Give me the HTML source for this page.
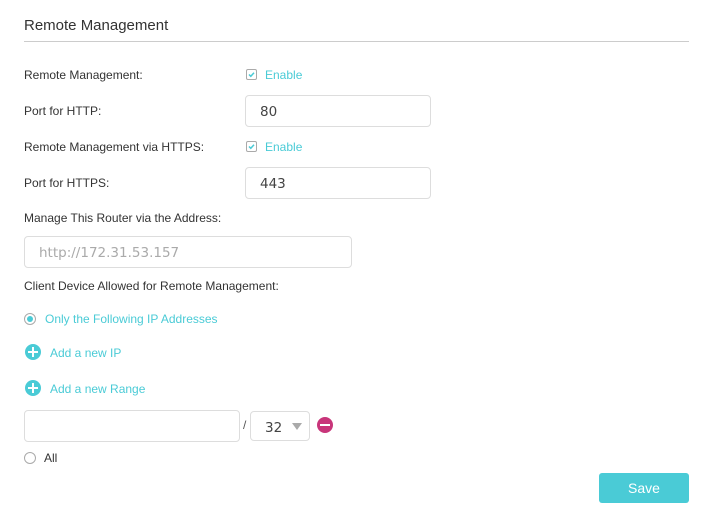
<!DOCTYPE html>
<html><head><style>
body{margin:0;width:708px;height:517px;background:#fff;font-family:"Liberation Sans",sans-serif;font-size:12px;color:#333;position:relative;overflow:hidden}
.a{position:absolute;white-space:nowrap}
.in{position:absolute;border:1px solid #ddd;border-radius:4px;box-sizing:border-box;font-family:"DejaVu Sans",sans-serif;font-size:13.5px;color:#444;padding-left:14px}
.t{color:#4acbd6}
</style></head><body>
<div class="a" style="left:24px;top:17px;font-size:15px;color:#333">Remote Management</div>
<div class="a" style="left:24px;top:41px;width:665px;height:1px;background:#ccc"></div>

<div class="a" style="left:24px;top:68px">Remote Management:</div>
<svg class="a" style="left:246px;top:69px" width="12" height="12"><rect x="0.5" y="0.5" width="10" height="10" rx="1.5" fill="#fff" stroke="#aaa"/><path d="M3 5.5L4.8 7.3L8 3.8" stroke="#4acbd6" stroke-width="1.5" fill="none"/></svg>
<div class="a t" style="left:265px;top:68px">Enable</div>

<div class="a" style="left:24px;top:104px">Port for HTTP:</div>
<div class="in" style="left:245px;top:95px;width:186px;height:32px;line-height:33px">80</div>

<div class="a" style="left:24px;top:140px">Remote Management via HTTPS:</div>
<svg class="a" style="left:246px;top:141px" width="12" height="12"><rect x="0.5" y="0.5" width="10" height="10" rx="1.5" fill="#fff" stroke="#aaa"/><path d="M3 5.5L4.8 7.3L8 3.8" stroke="#4acbd6" stroke-width="1.5" fill="none"/></svg>
<div class="a t" style="left:265px;top:140px">Enable</div>

<div class="a" style="left:24px;top:176px">Port for HTTPS:</div>
<div class="in" style="left:245px;top:167px;width:186px;height:32px;line-height:33px">443</div>

<div class="a" style="left:24px;top:211px">Manage This Router via the Address:</div>
<div class="in" style="left:24px;top:236px;width:328px;height:32px;line-height:33px;color:#aaa">http://172.31.53.157</div>

<div class="a" style="left:24px;top:279px">Client Device Allowed for Remote Management:</div>

<div class="a" style="left:24px;top:313px;width:12px;height:12px;border:1px solid #aaa;border-radius:50%;box-sizing:border-box"><div style="margin:2px;width:6px;height:6px;border-radius:50%;background:#4acbd6"></div></div>
<div class="a t" style="left:45px;top:312px">Only the Following IP Addresses</div>

<div class="a" style="left:25px;top:344px;width:16px;height:16px;border-radius:50%;background:#4acbd6"><div style="position:absolute;left:3px;top:7px;width:10px;height:2px;background:#fff"></div><div style="position:absolute;left:7px;top:3px;width:2px;height:10px;background:#fff"></div></div>
<div class="a t" style="left:50px;top:346px">Add a new IP</div>
<div class="a" style="left:25px;top:380px;width:16px;height:16px;border-radius:50%;background:#4acbd6"><div style="position:absolute;left:3px;top:7px;width:10px;height:2px;background:#fff"></div><div style="position:absolute;left:7px;top:3px;width:2px;height:10px;background:#fff"></div></div>
<div class="a t" style="left:50px;top:382px">Add a new Range</div>

<div class="in" style="left:24px;top:410px;width:216px;height:32px"></div>
<div class="a" style="left:243px;top:418px;color:#555">/</div>
<div class="in" style="left:250px;top:411px;width:60px;height:30px;line-height:32px;padding-left:14px">32</div>
<div class="a" style="left:292px;top:423px;width:0;height:0;border-left:5px solid transparent;border-right:5px solid transparent;border-top:7px solid #aaa"></div>
<div class="a" style="left:317px;top:417px;width:16px;height:16px;border-radius:50%;background:#c8357a"><div style="position:absolute;left:3px;top:7px;width:10px;height:2px;background:#fff"></div></div>

<div class="a" style="left:24px;top:452px;width:12px;height:12px;border:1px solid #aaa;border-radius:50%;box-sizing:border-box"></div>
<div class="a" style="left:44px;top:451px">All</div>

<div class="a" style="left:599px;top:473px;width:90px;height:30px;background:#4acbd6;border-radius:3px;color:#fff;font-size:14px;text-align:center;line-height:31px">Save</div>
</body></html>
